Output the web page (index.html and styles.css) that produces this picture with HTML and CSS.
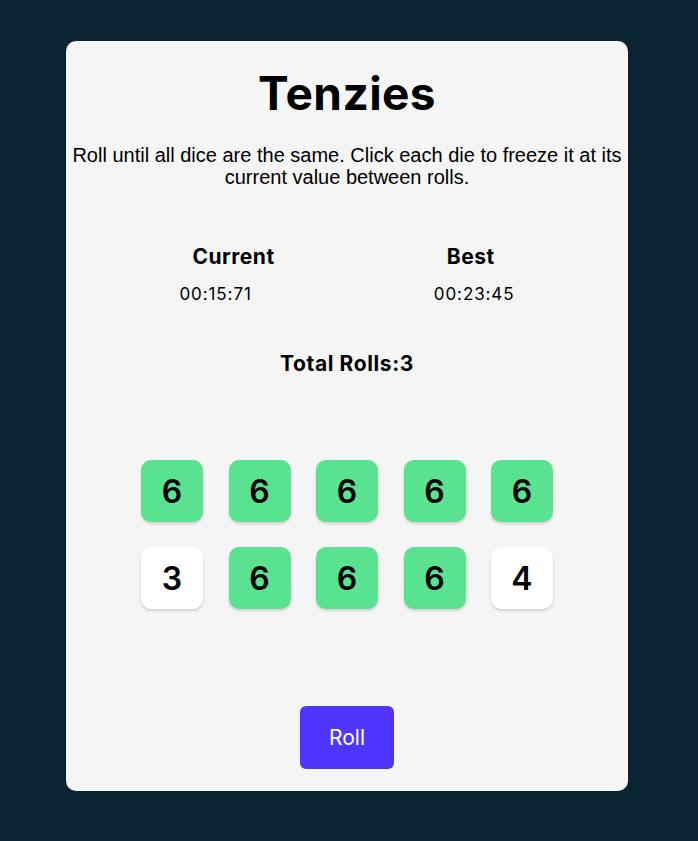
FILE: index.html
```html
<!DOCTYPE html>
<html>
<head>
<meta charset="utf-8">
<link rel="stylesheet" href="styles.css">
</head>
<body>
<main class="card">
  <h1 class="title">Tenzies</h1>
  <p class="instructions">Roll until all dice are the same. Click each die to freeze it at its current value between rolls.</p>
  <div class="timers">
    <div class="timer">
      <h3 class="timer-label">Current</h3>
      <p class="timer-value">00:15:71</p>
    </div>
    <div class="timer">
      <h3 class="timer-label">Best</h3>
      <p class="timer-value">00:23:45</p>
    </div>
  </div>
  <h3 class="rolls">Total Rolls:3</h3>
  <div class="dice">
    <div class="die held">6</div>
    <div class="die held">6</div>
    <div class="die held">6</div>
    <div class="die held">6</div>
    <div class="die held">6</div>
    <div class="die">3</div>
    <div class="die held">6</div>
    <div class="die held">6</div>
    <div class="die held">6</div>
    <div class="die">4</div>
  </div>
  <button class="roll-btn">Roll</button>
</main>
</body>
</html>
```

FILE: styles.css
```css
* { box-sizing: border-box; }
html, body { margin: 0; padding: 0; }
body {
  background: #0B2434;
  font-family: Inter, "Noto Sans", sans-serif;
  padding: 41px 70px 50px 66px;
  min-height: 841px;
}
.card {
  width: 562px;
  height: 750px;
  background: #F5F5F5;
  border-radius: 10px;
  display: flex;
  flex-direction: column;
  align-items: center;
  padding: 0 4px;
}
.title {
  margin: 24px 0 0;
  font-size: 46px;
  font-weight: 700;
  letter-spacing: 0.4px;
  line-height: 56px;
  color: #000;
}
.instructions {
  margin: 23px 0 0;
  font-family: "Liberation Sans", Arial, sans-serif;
  font-size: 20px;
  line-height: 22px;
  text-align: center;
  color: #000;
}
.timers {
  display: flex;
  justify-content: space-between;
  width: 335px;
  margin-top: 56px;
}
.timer {
  display: flex;
  flex-direction: column;
  align-items: flex-start;
}
.timer-label {
  margin: 0 0 0 13px;
  font-size: 21px;
  font-weight: 700;
  letter-spacing: 0.5px;
  line-height: 26px;
}
.timer-value {
  margin: 14px 0 0;
  font-size: 17px;
  letter-spacing: 0.9px;
  line-height: 20px;
}
.rolls {
  margin: 47px 0 0;
  font-size: 21px;
  font-weight: 700;
  letter-spacing: 0.6px;
  line-height: 26px;
}
.dice {
  margin-top: 83px;
  display: grid;
  grid-template-columns: repeat(5, 62px);
  column-gap: 25.5px;
  row-gap: 25px;
}
.die {
  width: 62px;
  height: 62px;
  border-radius: 10px;
  background: #FFFFFF;
  box-shadow: 0 2px 3px rgba(0, 0, 0, 0.15);
  display: flex;
  align-items: center;
  justify-content: center;
  font-size: 32px;
  font-weight: 600;
  color: #000;
}
.die.held { background: #59E391; }
.roll-btn {
  margin-top: 97px;
  width: 94px;
  height: 63px;
  border: none;
  border-radius: 6px;
  background: #5035FF;
  color: #fff;
  font-family: Inter, "Noto Sans", sans-serif;
  font-size: 21px;
  cursor: pointer;
}
```
